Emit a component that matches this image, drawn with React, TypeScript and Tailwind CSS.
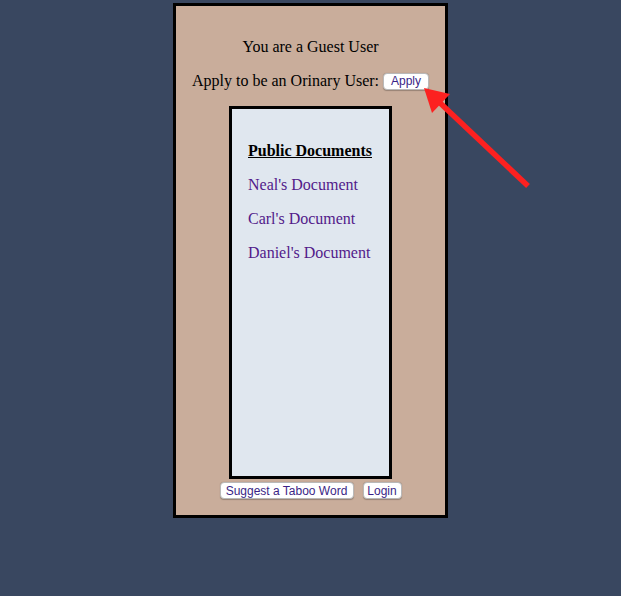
import React from "react";

export default function App() {
  const btn =
    "bg-white border border-[#b9b9b9] rounded-[4px] text-[12px] leading-none text-[#3a1f86] h-[17px] inline-flex items-center justify-center whitespace-nowrap [font-family:'Liberation_Sans',Arial,sans-serif] shadow-[0_0.5px_1px_rgba(0,0,0,0.25)]";
  return (
    <div className="relative w-[621px] h-[596px] bg-[#394760] overflow-hidden [font-family:'Liberation_Serif','Times_New_Roman',serif] text-black">
      <div className="mx-auto mt-[3px] w-[275px] h-[515px] border-[3px] border-black bg-[#c9ad9b] flex flex-col items-center">
        <p className="mt-[32px] text-[16px] leading-[18px] whitespace-nowrap">You are a Guest User</p>
        <div className="mt-[16px] flex items-center text-[16px] leading-[18px] whitespace-nowrap">
          <span>Apply to be an Orinary User:</span>
          <button className={btn + " ml-[4px] w-[46px]"}>Apply</button>
        </div>
        <div className="mt-[16px] w-[163px] h-[373px] border-[3px] border-black bg-[#e0e7ef] pl-[16px] pr-[17px] pt-[33px] whitespace-nowrap">
          <p className="font-bold underline text-[16px] leading-[18px]">Public Documents</p>
          <p className="mt-[16px] text-[16px] leading-[18px] text-[#521a8a]">Neal's Document</p>
          <p className="mt-[16px] text-[16px] leading-[18px] text-[#521a8a]">Carl's Document</p>
          <p className="mt-[16px] text-[16px] leading-[18px] text-[#521a8a]">Daniel's Document</p>
        </div>
        <div className="mt-[3px] flex gap-[9px]">
          <button className={btn + " w-[134px]"}>Suggest a Taboo Word</button>
          <button className={btn + " w-[39px]"}>Login</button>
        </div>
      </div>
      <svg className="absolute left-0 top-0" width="621" height="596" viewBox="0 0 621 596">
        <line x1="528" y1="186" x2="438" y2="101" stroke="#fc2120" strokeWidth="5.5" strokeLinecap="butt" />
        <polygon points="424,88 432,113 450,94" fill="#fc2120" />
      </svg>
    </div>
  );
}
